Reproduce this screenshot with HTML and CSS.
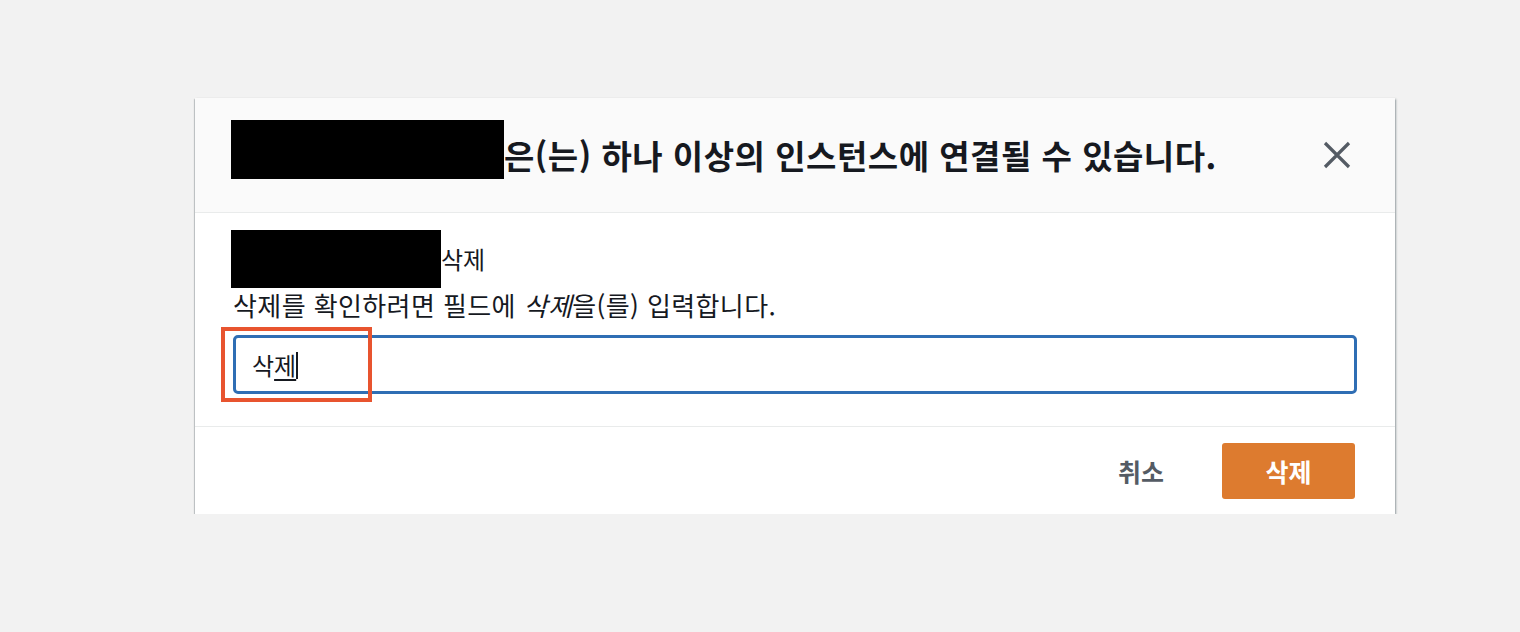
FILE: index.html
```html
<!DOCTYPE html>
<html lang="ko">
<head>
<meta charset="utf-8">
<link rel="stylesheet" href="styles.css">
</head>
<body>
<div class="page">
  <div class="modal">
    <div class="modal-header">
      <h2 class="title"><span class="redact redact-title"></span><span class="title-text">은(는) 하나 이상의 인스턴스에 연결될 수 있습니다.</span></h2>
      <button class="close" aria-label="닫기">
        <svg width="28" height="28" viewBox="0 0 28 28"><path d="M2 2 L26 26 M26 2 L2 26" stroke="#545b64" stroke-width="3.2" fill="none" stroke-linecap="butt"/></svg>
      </button>
    </div>
    <div class="modal-body">
      <div class="line1"><span class="redact redact-name"></span><span>삭제</span></div>
      <p class="hint">삭제를 확인하려면 필드에 <em>삭제</em>을(를) 입력합니다.</p>
      <div class="field">
        <div class="input"><span>삭</span><span class="composing">제</span><span class="caret"></span></div>
        <div class="highlight"></div>
      </div>
    </div>
    <div class="modal-footer">
      <button class="btn-link">취소</button>
      <button class="btn-primary">삭제</button>
    </div>
  </div>
</div>
</body>
</html>
```

FILE: styles.css
```css
html, body {
  margin: 0;
  padding: 0;
  background: #f2f2f2;
  font-family: "Noto Sans CJK KR", "Noto Sans", sans-serif;
  color: #16191f;
}
.page {
  padding: 98px 0 0 195px;
}
.modal {
  width: 1200px;
  background: #fff;
  box-shadow: 0 2px 1px 0 rgba(0, 28, 36, 0.35), 1px 1px 2px 0 rgba(0, 28, 36, 0.35), -1px 1px 1px 0 rgba(0, 28, 36, 0.15);
}
.modal-header {
  height: 115px;
  box-sizing: border-box;
  background: #fafafa;
  border-bottom: 1px solid #e9ebeb;
  display: flex;
  align-items: flex-start;
  justify-content: space-between;
  padding: 22px 44px 0 36px;
}
.title {
  margin: 0;
  font-size: 33px;
  font-weight: 700;
  display: flex;
  align-items: center;
  line-height: 44px;
}
.title-text {
  margin-top: 10px;
  letter-spacing: 0.5px;
}
.redact {
  display: inline-block;
  background: #000;
}
.redact-title {
  width: 273px;
  height: 59px;
}
.close {
  border: 0;
  background: none;
  padding: 0;
  width: 28px;
  height: 28px;
  margin-top: 21px;
  cursor: pointer;
}
.modal-body {
  padding: 17px 38px 32px 36px;
  border-bottom: 1px solid #e9ebeb;
}
.line1 {
  display: flex;
  align-items: center;
  font-size: 24px;
  line-height: 30px;
}
.redact-name {
  width: 210px;
  height: 58px;
}
.hint {
  margin: 0 0 0 2px;
  font-size: 26px;
  line-height: 34px;
  letter-spacing: 0.4px;
}
.hint em {
  font-style: italic;
}
.field {
  position: relative;
  margin: 13px 0 0 2px;
}
.input {
  height: 53px;
  border: 3px solid #2f6eb4;
  border-radius: 5px;
  display: flex;
  align-items: center;
  padding: 0 16px;
  font-size: 24px;
  color: #16191f;
}
.composing {
  text-decoration: underline;
  text-decoration-thickness: 2px;
  text-underline-offset: 4px;
}
.caret {
  display: inline-block;
  width: 2px;
  height: 27px;
  background: #16191f;
  margin-top: 2px;
}
.highlight {
  position: absolute;
  left: -12px;
  top: -8px;
  width: 143px;
  height: 67px;
  border: 4px solid #e8542f;
}
.modal-footer {
  display: flex;
  justify-content: flex-end;
  align-items: center;
  padding: 16px 40px 15px 0;
}
.btn-link {
  border: 0;
  background: none;
  font-family: inherit;
  font-size: 25px;
  font-weight: 700;
  color: #545b64;
  padding: 0;
  margin-right: 58px;
}
.btn-primary {
  width: 133px;
  height: 56px;
  border: 0;
  border-radius: 3px;
  background: #dd7b2f;
  color: #fff;
  font-family: inherit;
  font-size: 25px;
  font-weight: 700;
}
```
